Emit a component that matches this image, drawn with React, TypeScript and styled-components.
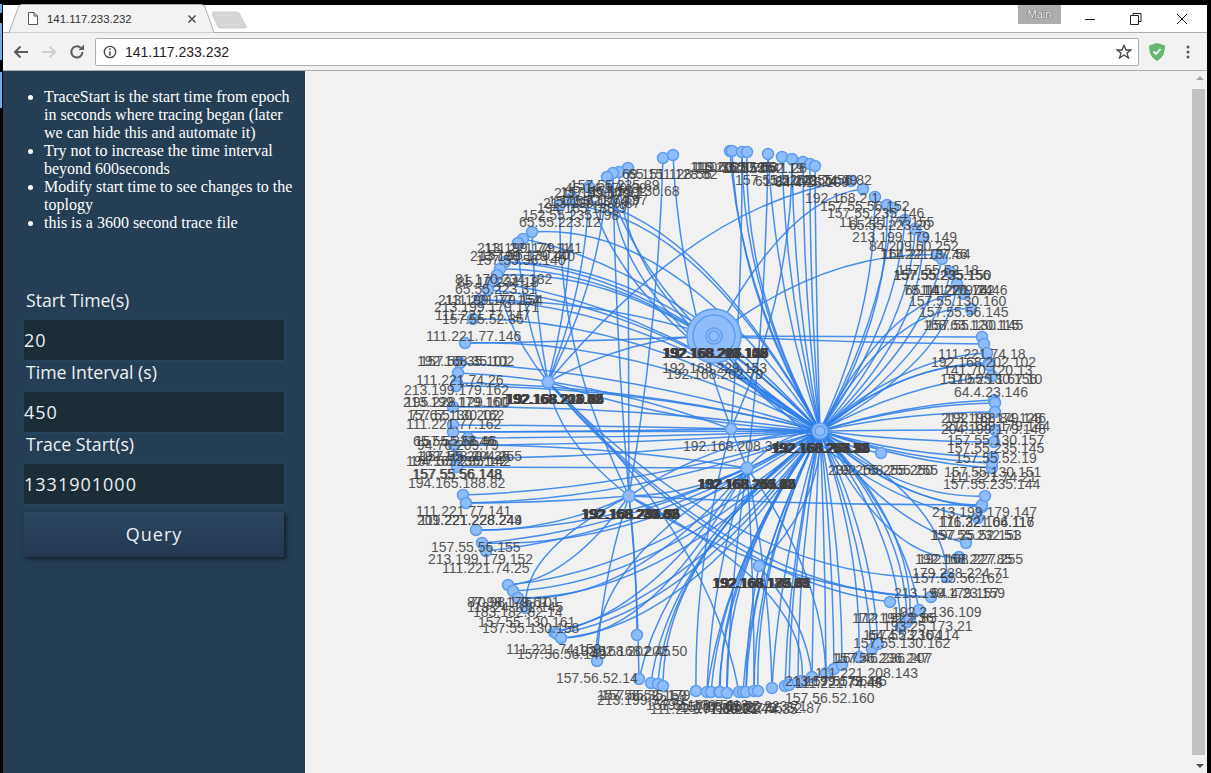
import React from "react";
import styled, { createGlobalStyle } from "styled-components";

const Global = createGlobalStyle`
  html, body { margin: 0; padding: 0; height: 100%; background: #000; overflow: hidden; }
  #root { height: 100%; }
  * { box-sizing: border-box; }
`;

const Frame = styled.div`
  width: 1211px; height: 773px; background: #000; position: relative;
  padding: 5px 4px 0 3px; display: flex; flex-direction: column;
`;
const EdgeGlow = styled.div`
  position: absolute; left: 0; top: 0; width: 2px; height: 108px;
  background: linear-gradient(#000 0 4px, #6ab0ee 4px 13px, #000 13px 23px, #6ab0ee 23px 60px, #000 60px 72px, #6ab0ee 72px);
`;
const TabStrip = styled.div`
  height: 28px; flex: none; background: #fff; border-bottom: 1px solid #adadad;
  display: flex; align-items: flex-end; padding-left: 5px; position: relative;
`;
const Tab = styled.div`
  width: 207px; height: 29px; margin-bottom: -1px; position: relative; flex: none;
  display: flex; align-items: center; padding: 0 18px 0 20px; gap: 9px;
`;
const TabShape = styled.svg`position: absolute; left: 0; top: 0;`;
const TabTitle = styled.span`
  position: relative; flex: 1; font: 11.4px "Liberation Sans", Arial, sans-serif; color: #333; white-space: nowrap;
`;
const Glyph = styled.svg`position: relative; flex: none; display: block;`;
const NewTab = styled.svg`flex: none; margin: 0 0 3px -3px; display: block;`;
const Badge = styled.div`
  position: absolute; left: 1015px; top: 0; width: 43px; height: 19px; background: #adadad; color: #fff;
  font: 11px "Liberation Sans", Arial, sans-serif; text-align: center; line-height: 18px;
  text-shadow: 0 0 1px #333, 0 0 1px #333;
`;
const WindowButtons = styled.div`
  position: absolute; right: 2px; top: 0; height: 27px; display: flex; align-items: center;
`;
const WinBtn = styled.div`width: 46px; display: flex; justify-content: center;`;

const Toolbar = styled.div`
  height: 38px; flex: none; background: #f2f2f2; border-bottom: 1px solid #adadad;
  display: flex; align-items: center; padding: 0 0 0 10px;
`;
const NavIcon = styled.svg`flex: none; display: block; margin-right: 12px;`;
const Omnibox = styled.div`
  width: 1044px; height: 28px; margin-left: -2px; background: #fff; border: 1px solid #adadad; border-radius: 2px;
  display: flex; align-items: center; padding: 0 6px 0 7px; gap: 8px; flex: none;
`;
const Url = styled.span`flex: 1; font: 14px "Liberation Sans", Arial, sans-serif; color: #222;`;
const ToolEnd = styled.div`display: flex; align-items: center; gap: 20px; margin-left: 9px;`;

const Main = styled.div`flex: 1; min-height: 0; display: flex; background: #f1f1f1;`;
const Sidebar = styled.aside`
  width: 302px; flex: none; background: #253e53; padding: 17px 8px 0 21px;
  display: flex; flex-direction: column;
`;
const Notes = styled.ul`
  margin: 0 0 56px; padding: 0 0 0 20px; color: #fff;
  font: 16px/18px "Liberation Serif", "Times New Roman", serif;
`;
const Label = styled.label`
  display: block; height: 32px; padding-left: 2px; color: #f2f2f2;
  font: 17.7px/24px "Open Sans", sans-serif;
`;
const Field = styled.div`
  width: 260px; height: 40px; background: #1c2d38; color: #eaf0f4;
  font: 18px/40px "Open Sans", sans-serif; letter-spacing: 1px;
  box-shadow: 1px 1px 4px rgba(70,120,160,.25);
`;
const QueryButton = styled.button`
  width: 260px; height: 45px; margin-top: 8px; border: 0; color: #e8eef2; padding: 0 0 2px;
  background: linear-gradient(#2e465f, #233750);
  font: 18px "Open Sans", sans-serif; letter-spacing: 1px;
  box-shadow: 2px 2px 4px rgba(0,0,0,.55);
`;
const Stage = styled.main`flex: 1; min-width: 0; position: relative; overflow: hidden;`;
const Graph = styled.svg`position: absolute; left: -305px; top: -71px;`;
const Link = styled.path`fill: none; stroke: #3080ea; stroke-width: 1.5; opacity: .88;`;
const Node = styled.circle`fill: #8fbdfc; stroke: #5f9eee; stroke-width: 1.5;`;
const NodeLabel = styled.text`font: 14px "Liberation Sans", Arial, sans-serif; fill: #3f3f3f; opacity: .88;`;
const Scrollbar = styled.div`
  position: absolute; right: 0; top: 0; bottom: 0; width: 15px; background: #f1f1f1;
  display: flex; flex-direction: column; align-items: center; justify-content: space-between; padding: 5px 0 5px;
`;
const Arrow = styled.div<{ $dir: "up" | "down" }>`
  width: 0; height: 0; border-left: 4px solid transparent; border-right: 4px solid transparent;
  ${(p) => (p.$dir === "up" ? "border-bottom: 4px solid #a3a3a3;" : "border-top: 4px solid #505050;")}
`;
const Thumb = styled.div`width: 13px; height: 666px; background: #c1c1c1; margin-right: 2px;`;

type H = "m" | "b" | "l" | "q" | "r" | "s" | "t";
const hubs: Record<H, [number, number]> = {
  m: [820, 431], b: [714, 336], l: [548, 382], q: [629, 496], r: [747, 468], s: [759, 566], t: [731, 429],
};
const nodes: [number, number, string][] = [
  [663,158,"q"],[673,155,"r"],[628,168,"q"],[619,172,"m"],[613,173,"mq"],[607,177,"ml"],[589,187,"ml"],[572,198,"ml"],[560,205,"mq"],
  [532,232,"ml"],[523,239,"m"],[518,243,"l"],[505,262,"mb"],[500,269,"m"],[497,275,"ml"],[492,282,"m"],[488,290,"m"],[480,300,"mb"],
  [473,319,"m"],[465,343,"mb"],[460,363,"m"],[458,373,"t"],[457,383,"m"],[456,386,"m"],[453,407,"m"],[453,425,"m"],[453,432,"mt"],
  [468,438,"m"],[454,445,"mr"],[457,458,"m"],[457,467,"r"],[463,495,"m"],[466,503,"mq"],[476,530,"mq"],[482,543,"mr"],[486,551,"m"],
  [508,585,"mq"],[513,591,"m"],[518,598,"mr"],[526,608,"q"],[554,632,"mr"],[557,634,"m"],[561,638,"mr"],[637,635,"q"],[597,661,"mq"],
  [639,679,"mq"],[651,683,"m"],[658,684,"m"],[663,686,"m"],[696,691,"t"],[707,692,"mr"],[711,692,"m"],[719,692,"m"],[720,692,"m"],
  [727,693,"mr"],[739,692,"l"],[743,692,"m"],[746,692,"ms"],[754,691,"mr"],[758,691,"m"],[772,688,"mr"],[785,686,"m"],[789,685,"m"],
  [798,682,"m"],[802,681,"q"],[812,677,"ms"],[826,673,"mr"],[834,669,"m"],[842,665,"m"],[859,657,"m"],[872,649,"m"],[878,644,"m"],
  [901,627,"m"],[907,622,"m"],[910,619,"m"],[919,610,"m"],[890,602,"l"],[931,597,"ql"],[947,577,"ml"],[959,557,"m"],[966,543,"m"],
  [978,518,"b"],[982,507,"m"],[982,505,"mq"],[985,496,"m"],[992,468,"m"],[992,463,"m"],[993,457,"m"],[994,442,"m"],[995,430,"m"],[881,453,"m"],
  [730,151,"m"],[732,151,"m"],[742,152,"mt"],[747,152,"m"],[768,154,"mr"],[782,157,"m"],[792,159,"mt"],[803,162,"m"],[810,164,"m"],[815,166,"m"],
  [851,181,"l"],[863,189,"b"],[875,197,"m"],[887,205,"m"],[893,208,"m"],[905,220,"m"],[915,229,"m"],[923,237,"m"],[937,255,"b"],[942,259,"m"],
  [950,272,"m"],[957,284,"m"],[964,294,"m"],[971,309,"m"],[982,337,"b"],[984,344,"b"],[987,353,"m"],[989,363,"m"],[989,365,"m"],[992,376,"m"],
  [994,400,"m"],[995,403,"m"],[995,412,"m"],
];
const cluster = (x: number, y: number, n: number, a: number, b: number): [number, number, string][] =>
  Array.from({ length: n }, (_, i) => [x + (i % 3), y - (i % 2) * 0.5, `192.168.${a + i * 3}.${b + i * 7}`]);
const labels: [number, number, string][] = [
  [622,179,"69.151.128.56"],[628,179,"65.151.128.52"],[690,172,"116.202.11.63"],[692,172,"119.63.50.26"],[695,172,"110.36.87.66"],[722,173,"157.55.52.19"],[727,173,"111.70.41.26"],
  [565,193,"45.14.179.89"],[570,190,"157.55.235.89"],[590,196,"157.55.130.68"],[554,198,"211.199.179.1"],[560,197,"157.55.56.97"],
  [543,208,"213.199.179.87"],[548,206,"157.55.130.97"],[560,205,"111.221.74.97"],[537,213,"194.165.188.9"],[522,220,"152.55.235.198"],[519,227,"65.55.223.12"],
  [477,253,"213.199.179.141"],[484,253,"111.221.74.11"],[470,261,"213.199.179.140"],[480,260,"157.55.130.40"],[476,265,"157.55.56.140"],
  [455,284,"81.170.234.182"],[455,294,"65.55.223.31"],[457,287,"85.17.234.18"],[438,305,"213.199.179.154"],[445,305,"111.221.77.154"],[434,312,"213.199.179.171"],[435,320,"111.221.77.147"],[442,324,"157.55.52.36"],
  [426,341,"111.221.77.146"],[417,366,"192.168.35.102"],[420,366,"157.55.35.101"],[416,385,"111.221.74.26"],[404,395,"213.199.179.162"],
  [403,407,"213.199.179.160"],[405,407,"195.228.129.100"],[407,420,"157.55.130.162"],[410,420,"77.67.130.202"],[406,429,"111.221.77.162"],
  [413,446,"65.55.223.46"],[415,446,"157.55.56.46"],[417,450,"94.76.209.79"],[417,461,"192.168.204.255"],[420,461,"157.55.204.35"],[406,466,"194.165.235.142"],[410,466,"157.55.235.142"],
  [412,479,"157.55.56.148"],[413,479,"157.55.56.148"],[408,488,"194.165.188.82"],[416,516,"111.221.77.141"],[417,525,"209.221.228.249"],[419,525,"111.221.228.244"],
  [431,552,"157.55.56.155"],[428,564,"213.199.179.152"],[442,573,"111.221.74.25"],[467,607,"87.98.179.61"],[470,607,"70.98.176.101"],[467,612,"113.24.182.145"],[473,617,"183.182.82.14"],
  [478,627,"157.55.130.161"],[482,633,"157.55.130.158"],[506,654,"111.221.74.159"],[517,659,"157.56.56.149"],[573,656,"192.168.202.45"],[590,656,"192.168.202.50"],
  [556,683,"157.56.52.14"],[597,700,"157.56.52.159"],[601,700,"157.55.35.179"],[597,705,"213.199.32.51"],[646,710,"157.55.130.51"],[650,714,"111.221.77.60"],
  [660,710,"192.168.5.113"],[680,712,"157.55.56.22"],[695,713,"157.56.52.40"],[710,714,"111.221.74.35"],[725,711,"65.55.223.71"],[740,713,"157.55.52.87"],
  [785,703,"157.56.52.160"],[785,686,"213.199.179.44"],[795,688,"111.221.74.45"],[805,686,"157.55.56.85"],[815,678,"111.221.208.143"],
  [832,663,"157.56.236.247"],[835,663,"167.46.236.207"],[853,648,"157.55.130.162"],[863,640,"157.55.236.114"],[868,640,"64.4.23.104"],
  [883,631,"193.25.173.21"],[852,623,"172.192.2.36"],[856,623,"112.192.2.85"],[892,617,"192.2.136.109"],[894,598,"213.199.179.157"],[931,598,"64.4.23.159"],
  [912,578,"179.238.224.71"],[913,583,"157.55.56.162"],[915,564,"192.168.227.85"],[918,564,"192.168.227.255"],[930,540,"157.55.232.51"],[932,540,"197.25.52.153"],
  [938,527,"176.32.106.116"],[940,527,"111.221.64.117"],[932,517,"213.199.179.147"],[944,477,"157.55.130.151"],[949,482,"111.221.74.21"],[943,489,"157.55.235.144"],
  [955,463,"157.55.52.19"],[947,453,"157.55.235.145"],[947,445,"157.55.130.157"],[941,423,"213.199.179.146"],[945,423,"192.168.84.128"],[941,434,"204.199.179.148"],[945,431,"213.199.179.144"],
  [828,475,"239.255.255.250"],[833,475,"192.168.255.255"],[805,203,"192.168.2.1"],[820,211,"157.55.56.152"],[827,218,"157.55.235.146"],[839,227,"111.221.77.155"],[849,230,"65.55.223.20"],
  [852,242,"213.199.179.149"],[869,251,"84.209.60.252"],[880,259,"111.221.77.46"],[881,259,"164.22.137.54"],[897,275,"157.55.52.18"],[893,280,"157.55.235.156"],[894,280,"157.55.235.150"],
  [903,295,"78.141.179.24"],[905,295,"65.14.220.162"],[920,295,"111.221.74.46"],[909,306,"157.55.130.160"],[919,317,"157.55.56.145"],[923,330,"168.63.120.115"],[926,330,"157.55.130.145"],
  [938,359,"111.221.74.18"],[931,367,"192.168.202.102"],[943,375,"141.70.120.13"],[940,384,"157.55.130.156"],[950,384,"110.25.1.67.10"],[954,397,"64.4.23.146"],
  [735,185,"157.55.52.40"],[755,186,"61.22.173.24"],[770,185,"111.221.74.39"],[790,185,"157.55.56.82"],[775,187,"64.4.23.109"],[683,451,"192.168.208.34"],
  ...cluster(662,358,9,201,101),
  [662,373,"192.168.229.153"],[666,379,"192.168.202.79"],
  ...cluster(505,404,8,204,20),
  ...cluster(581,519,9,230,40),
  ...cluster(697,489,9,240,20),
  ...cluster(712,588,7,170,27),
  ...cluster(771,453,10,250,10),
];

function curve(x: number, y: number, hx: number, hy: number, i: number) {
  const dx = x - hx, dy = y - hy;
  const k = 0.35 + (i % 5) * 0.05;
  const off = Math.min(Math.abs(dx), Math.abs(dy)) * k;
  const mx = (x + hx) / 2, my = (y + hy) / 2;
  const cx = Math.abs(dy) > Math.abs(dx) ? mx + Math.sign(dx) * off : mx;
  const cy = Math.abs(dy) > Math.abs(dx) ? my : my + Math.sign(dy) * off;
  return `M${x} ${y}Q${cx.toFixed(1)} ${cy.toFixed(1)} ${hx} ${hy}`;
}

const Shield = () => (
  <svg width="18" height="20" viewBox="0 0 18 20"><path d="M9 1L17 3.5C17 11 14.5 16 9 19C3.5 16 1 11 1 3.5Z" fill="#68b574"/><path d="M5.5 9.5L8 12L12.5 7" fill="none" stroke="#fff" strokeWidth="1.8"/></svg>
);

export default function App() {
  return (
    <Frame>
      <Global />
      <EdgeGlow />
      <TabStrip>
        <Tab>
          <TabShape width="207" height="29" viewBox="0 0 207 29">
            <path d="M0 28.5H1L10.5 3Q11 .5 14 .5H193Q196 .5 197 3L206 28.5" fill="#f2f2f2" stroke="#adadad" />
          </TabShape>
          <Glyph width="10" height="13" viewBox="0 0 10 13"><path d="M.5 .5H6L9.5 4V12.5H.5Z M6 .5V4H9.5" fill="#fff" stroke="#555" /></Glyph>
          <TabTitle>141.117.233.232</TabTitle>
          <Glyph width="10" height="10" viewBox="0 0 10 10"><path d="M1.5 1.5L8.5 8.5M8.5 1.5L1.5 8.5" stroke="#555" strokeWidth="1.6" /></Glyph>
        </Tab>
        <NewTab width="36" height="18" viewBox="0 0 36 18"><path d="M1 1H25Q26 1 27 2L34 15Q35 17 33 17H8Q7 17 6 16L0 3Q0 1 1 1Z" fill="#d6d6d6" stroke="#cfcfcf" /></NewTab>
        <Badge>Main</Badge>
        <WindowButtons>
          <WinBtn><svg width="12" height="12" viewBox="0 0 12 12"><path d="M1 6.5H11" stroke="#222" /></svg></WinBtn>
          <WinBtn><svg width="12" height="12" viewBox="0 0 12 12"><path d="M3 2.5V.5H11V8.5H9M.5 2.5H8.5V11.5H.5Z" fill="none" stroke="#222" /></svg></WinBtn>
          <WinBtn><svg width="12" height="12" viewBox="0 0 12 12"><path d="M1 1L11 11M11 1L1 11" stroke="#222" /></svg></WinBtn>
        </WindowButtons>
      </TabStrip>
      <Toolbar>
        <NavIcon width="16" height="14" viewBox="0 0 16 14"><path d="M15 7H2M7.5 1.5L2 7L7.5 12.5" fill="none" stroke="#5a5a5a" strokeWidth="2" /></NavIcon>
        <NavIcon width="16" height="14" viewBox="0 0 16 14"><path d="M1 7H14M8.5 1.5L14 7L8.5 12.5" fill="none" stroke="#cfcfcf" strokeWidth="2" /></NavIcon>
        <NavIcon width="16" height="16" viewBox="0 0 16 16"><path d="M13.5 8A5.6 5.6 0 1 1 11.7 3.8" fill="none" stroke="#5a5a5a" strokeWidth="2" /><path d="M9.5 6H15V.5Z" fill="#5a5a5a" /></NavIcon>
        <Omnibox>
          <Glyph width="14" height="14" viewBox="0 0 14 14"><circle cx="7" cy="7" r="5.7" fill="none" stroke="#444" strokeWidth="1.3" /><path d="M7 6.2V10.5M7 3.5V5" stroke="#444" strokeWidth="1.5" /></Glyph>
          <Url>141.117.233.232</Url>
          <Glyph width="16" height="15" viewBox="0 0 16 15"><path d="M8 1.2L10 6H15L11 9L12.5 14L8 11L3.5 14L5 9L1 6H6Z" fill="none" stroke="#444" strokeWidth="1.3" /></Glyph>
        </Omnibox>
        <ToolEnd>
          <Shield />
          <svg width="4" height="14" viewBox="0 0 4 14"><g fill="#5a5a5a"><circle cx="2" cy="2" r="1.5" /><circle cx="2" cy="7" r="1.5" /><circle cx="2" cy="12" r="1.5" /></g></svg>
        </ToolEnd>
      </Toolbar>
      <Main>
        <Sidebar>
          <Notes>
            <li>TraceStart is the start time from epoch in seconds where tracing began (later we can hide this and automate it)</li>
            <li>Try not to increase the time interval beyond 600seconds</li>
            <li>Modify start time to see changes to the toplogy</li>
            <li>this is a 3600 second trace file</li>
          </Notes>
          <Label>Start Time(s)</Label>
          <Field>20</Field>
          <Label>Time Interval (s)</Label>
          <Field>450</Field>
          <Label>Trace Start(s)</Label>
          <Field>1331901000</Field>
          <QueryButton>Query</QueryButton>
        </Sidebar>
        <Stage>
          <Graph width="1211" height="773" viewBox="0 0 1211 773">
            {nodes.flatMap(([x, y, hs], i) =>
              hs.split("").map((h, j) => {
                const [hx, hy] = hubs[h as H];
                return <Link key={`${i}-${j}`} d={curve(x, y, hx, hy, i + j)} />;
              })
            )}
            {(["b","l","q","r","s","t"] as H[]).map((h, i) => (
              <Link key={h} d={curve(hubs.m[0], hubs.m[1], hubs[h][0], hubs[h][1], i)} />
            ))}
            <Link d={curve(hubs.l[0], hubs.l[1], hubs.q[0], hubs.q[1], 1)} />
            <Link d={curve(hubs.q[0], hubs.q[1], hubs.r[0], hubs.r[1], 2)} />
            <Link d={curve(hubs.b[0], hubs.b[1], hubs.l[0], hubs.l[1], 3)} />
            {nodes.map(([x, y], i) => <Node key={i} cx={x} cy={y} r={5.5} />)}
            <Node cx={714} cy={336} r={27} />
            <Node cx={714} cy={336} r={21} />
            <Node cx={714} cy={336} r={8} />
            <Node cx={714} cy={336} r={5} />
            <Node cx={820} cy={431} r={8} />
            <Node cx={820} cy={431} r={5} />
            <Node cx={548} cy={382} r={6} />
            <Node cx={629} cy={496} r={6} />
            <Node cx={747} cy={468} r={6} />
            <Node cx={759} cy={566} r={5.5} />
            <Node cx={731} cy={429} r={5.5} />
            {labels.map(([x, y, t], i) => <NodeLabel key={i} x={x} y={y}>{t}</NodeLabel>)}
          </Graph>
          <Scrollbar>
            <Arrow $dir="up" />
            <Thumb />
            <Arrow $dir="down" />
          </Scrollbar>
        </Stage>
      </Main>
    </Frame>
  );
}
